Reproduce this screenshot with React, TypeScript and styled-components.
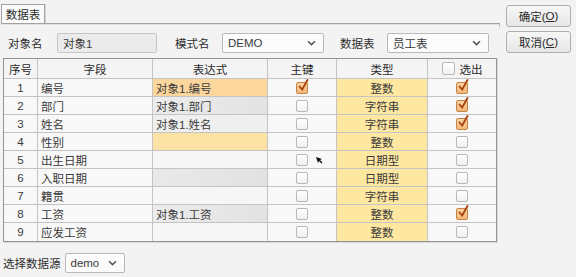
import React from 'react'
import styled, { createGlobalStyle } from 'styled-components'

const GlobalStyle = createGlobalStyle`
  html, body {
    margin: 0;
    padding: 0;
    background: #f2f3f2;
  }
  body {
    font-family: 'Liberation Sans', 'Noto Sans CJK SC', sans-serif;
    font-size: 11.5px;
    color: #3a3a3a;
  }
`

const Page = styled.div`
  position: relative;
  width: 576px;
  height: 277px;
  display: flex;
  flex-direction: row;
  overflow: hidden;
`

const MainColumn = styled.div`
  display: flex;
  flex-direction: column;
  width: 499px;
  padding-left: 1px;
`

const TabStrip = styled.div`
  position: relative;
  display: flex;
  align-items: flex-end;
  height: 24px;
  padding-top: 5px;
  box-sizing: border-box;
  border-bottom: 1px solid #a3a3a3;
  box-shadow: 0 1px 0 #e2e2e2;

  &::after {
    content: '';
    position: absolute;
    right: 0;
    bottom: -6px;
    width: 1px;
    height: 6px;
    background: linear-gradient(#a3a3a3, rgba(163, 163, 163, 0));
  }
`

const Tab = styled.div`
  display: flex;
  align-items: center;
  justify-content: center;
  width: 44px;
  height: 19px;
  box-sizing: border-box;
  border: 1px solid #a3a3a3;
  border-bottom: none;
  background: #fafafa;
  box-shadow: 1px 0 0 #d6d6d6;
  color: #2a2a2a;
`

const FormRow = styled.div`
  display: grid;
  grid-template-columns: 49px 100px 18px 47px 102px 16px 47px 102px;
  align-items: center;
  margin-top: 9px;
  padding-left: 7px;
  height: 20px;
`

const Label = styled.span`
  color: #2e2e2e;
  white-space: nowrap;
`

const Spacer = styled.span``

const TextInput = styled.div`
  display: flex;
  align-items: center;
  height: 20px;
  box-sizing: border-box;
  padding-left: 5px;
  border: 1px solid #c6c6c6;
  border-radius: 2px;
  background: #ebebeb;
`

const SelectBox = styled.div<{ $w?: number }>`
  display: flex;
  align-items: center;
  justify-content: space-between;
  width: ${(p) => (p.$w ? `${p.$w}px` : 'auto')};
  height: 20px;
  box-sizing: border-box;
  padding: 0 7px 0 5px;
  border: 1px solid #b9b9b9;
  border-radius: 2px;
  background: #fbfbfb;
`

const Chevron = () => (
  <svg width="9" height="6" viewBox="0 0 9 6">
    <path d="M1 1.2 L4.5 4.6 L8 1.2" fill="none" stroke="#555" strokeWidth="1.5" />
  </svg>
)

const Frame = styled.div`
  margin-top: 5px;
  margin-left: 2px;
  width: 494px;
  box-sizing: border-box;
  border: 1px solid #939393;
  box-shadow: 1px 1px 0 #dadada;
  display: grid;
  grid-template-columns: 34px 115px 115px 69px 91px 68px;
  background: #f8f8f8;
`

type Align = 'left' | 'center'

const Cell = styled.div<{ $align?: Align; $bg?: string; $last?: boolean; $bottom?: boolean; $head?: boolean }>`
  display: flex;
  align-items: center;
  justify-content: ${(p) => (p.$align === 'left' ? 'flex-start' : 'center')};
  gap: 5px;
  height: ${(p) => (p.$head ? 20 : 18)}px;
  box-sizing: border-box;
  padding-left: ${(p) => (p.$align === 'left' ? 3 : 0)}px;
  border-right: ${(p) => (p.$last ? 'none' : '1px solid #c4c4c4')};
  border-bottom: ${(p) => (p.$bottom ? 'none' : '1px solid #c4c4c4')};
  background: ${(p) => p.$bg || (p.$head ? '#f4f4f4' : '#f8f8f8')};
  color: ${(p) => (p.$head ? '#2a2a2a' : '#3a3a3a')};
  white-space: nowrap;
`

const Box = styled.span<{ $checked?: boolean; $size?: number }>`
  position: relative;
  display: inline-block;
  width: ${(p) => p.$size || 12}px;
  height: ${(p) => p.$size || 12}px;
  box-sizing: border-box;
  border: 1px solid ${(p) => (p.$checked ? '#c58446' : '#b7b7b7')};
  border-radius: 2px;
  background: ${(p) =>
    p.$checked ? 'linear-gradient(#fbd3a2, #f4b877)' : 'linear-gradient(#ffffff, #f1f1f1)'};

  svg {
    position: absolute;
    left: 1px;
    top: -4px;
  }
`

const CheckBox = ({ checked, size }: { checked?: boolean; size?: number }) => (
  <Box $checked={checked} $size={size}>
    {checked && (
      <svg width="12" height="13" viewBox="0 0 12 13">
        <path d="M1.5 7.5 L4.2 10.5 L9.5 1" fill="none" stroke="#a8400f" strokeWidth="1.8" strokeLinecap="round" />
      </svg>
    )}
  </Box>
)

const BottomRow = styled.div`
  display: flex;
  align-items: center;
  gap: 4px;
  margin-top: 10px;
  margin-left: 2px;
  height: 21px;
`

const SideColumn = styled.div`
  display: flex;
  flex-direction: column;
  gap: 4px;
  margin-left: 6px;
  padding-top: 5px;
`

const Button = styled.div`
  display: flex;
  align-items: center;
  justify-content: center;
  width: 65px;
  height: 22px;
  box-sizing: border-box;
  border: 1px solid #aeaeae;
  border-radius: 3px;
  background: linear-gradient(#f7f7f7, #e6e6e6);
  color: #2a2a2a;

  u {
    text-decoration: underline;
  }
`

const Cursor = styled.svg`
  position: absolute;
  left: 316px;
  top: 157px;
`

const YELLOW = '#fee7a1'

type Row = {
  name: string
  expr: string
  exprBg: string
  key: boolean
  type: string
  out: boolean
}

const rows: Row[] = [
  { name: '编号', expr: '对象1.编号', exprBg: '#fcd79d', key: true, type: '整数', out: true },
  { name: '部门', expr: '对象1.部门', exprBg: 'linear-gradient(90deg, #ececec, #e3e3e3)', key: false, type: '字符串', out: true },
  { name: '姓名', expr: '对象1.姓名', exprBg: '#efefef', key: false, type: '字符串', out: true },
  { name: '性别', expr: '', exprBg: '#fde2a6', key: false, type: '整数', out: false },
  { name: '出生日期', expr: '', exprBg: '#f6f6f6', key: false, type: '日期型', out: false },
  { name: '入职日期', expr: '', exprBg: 'linear-gradient(90deg, #e9e9e9, #e2e2e2)', key: false, type: '日期型', out: false },
  { name: '籍贯', expr: '', exprBg: '#f6f6f6', key: false, type: '字符串', out: false },
  { name: '工资', expr: '对象1.工资', exprBg: 'linear-gradient(90deg, #ececec, #e3e3e3)', key: false, type: '整数', out: true },
  { name: '应发工资', expr: '', exprBg: '#f6f6f6', key: false, type: '整数', out: false },
]

export default function App() {
  return (
    <Page>
      <GlobalStyle />
      <MainColumn>
        <TabStrip>
          <Tab>数据表</Tab>
        </TabStrip>

        <FormRow>
          <Label>对象名</Label>
          <TextInput>对象1</TextInput>
          <Spacer />
          <Label>模式名</Label>
          <SelectBox>
            <span>DEMO</span>
            <Chevron />
          </SelectBox>
          <Spacer />
          <Label>数据表</Label>
          <SelectBox>
            <span>员工表</span>
            <Chevron />
          </SelectBox>
        </FormRow>

        <Frame>
          <Cell $head>序号</Cell>
          <Cell $head>字段</Cell>
          <Cell $head>表达式</Cell>
          <Cell $head>主键</Cell>
          <Cell $head>类型</Cell>
          <Cell $head $last>
            <CheckBox size={13} />
            <span>选出</span>
          </Cell>
          {rows.map((r, i) => {
            const bottom = i === rows.length - 1
            return (
              <React.Fragment key={r.name}>
                <Cell $bottom={bottom}>{i + 1}</Cell>
                <Cell $bottom={bottom} $align="left">{r.name}</Cell>
                <Cell $bottom={bottom} $align="left" $bg={r.exprBg}>{r.expr}</Cell>
                <Cell $bottom={bottom}>
                  <CheckBox checked={r.key} />
                </Cell>
                <Cell $bottom={bottom} $bg={YELLOW}>{r.type}</Cell>
                <Cell $bottom={bottom} $last>
                  <CheckBox checked={r.out} />
                </Cell>
              </React.Fragment>
            )
          })}
        </Frame>

        <BottomRow>
          <Label>选择数据源</Label>
          <SelectBox $w={60}>
            <span>demo</span>
            <Chevron />
          </SelectBox>
        </BottomRow>
      </MainColumn>

      <SideColumn>
        <Button>
          确定(<u>O</u>)
        </Button>
        <Button>
          取消(<u>C</u>)
        </Button>
      </SideColumn>

      <Cursor width="7" height="7" viewBox="0 0 7 7">
        <path d="M0 0 L6 2 L4 3 L6.5 5.5 L5.5 6.5 L3 4 L2 6 Z" fill="#111" />
      </Cursor>
    </Page>
  )
}
